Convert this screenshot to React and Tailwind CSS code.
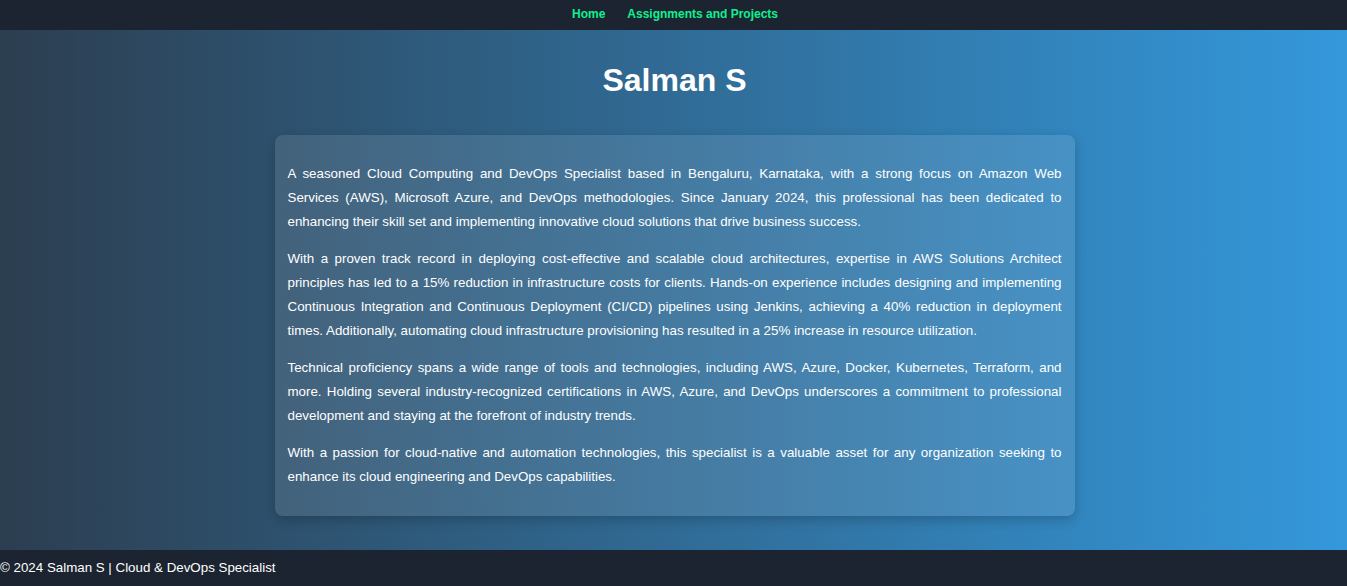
export default function App() {
  const paragraphs = [
    'A seasoned Cloud Computing and DevOps Specialist based in Bengaluru, Karnataka, with a strong focus on Amazon Web Services (AWS), Microsoft Azure, and DevOps methodologies. Since January 2024, this professional has been dedicated to enhancing their skill set and implementing innovative cloud solutions that drive business success.',
    'With a proven track record in deploying cost-effective and scalable cloud architectures, expertise in AWS Solutions Architect principles has led to a 15% reduction in infrastructure costs for clients. Hands-on experience includes designing and implementing Continuous Integration and Continuous Deployment (CI/CD) pipelines using Jenkins, achieving a 40% reduction in deployment times. Additionally, automating cloud infrastructure provisioning has resulted in a 25% increase in resource utilization.',
    'Technical proficiency spans a wide range of tools and technologies, including AWS, Azure, Docker, Kubernetes, Terraform, and more. Holding several industry-recognized certifications in AWS, Azure, and DevOps underscores a commitment to professional development and staying at the forefront of industry trends.',
    'With a passion for cloud-native and automation technologies, this specialist is a valuable asset for any organization seeking to enhance its cloud engineering and DevOps capabilities.',
  ]

  return (
    <div className="min-h-screen font-['Liberation_Sans',Arial,sans-serif] text-white">
      {/* Nav */}
      <nav className="h-[30px] pb-[2px] pl-[3px] bg-[#1b2430] flex items-center justify-center gap-[22px]">
        <a href="#" className="text-[12px] font-bold text-[#0ff08f]">Home</a>
        <a href="#" className="text-[12px] font-bold text-[#0ff08f]">Assignments and Projects</a>
      </nav>

      {/* Main */}
      <main className="bg-[linear-gradient(to_right,#2c3e50,#3498db)] pl-[2px] flex flex-col items-center">
        <h1 className="mt-[32px] text-[32px] leading-[37px] font-bold">Salman S</h1>
        <section className="mt-[36px] mb-[34px] w-[800px] bg-white/10 rounded-lg shadow-[0_4px_12px_rgba(0,0,0,0.2)] px-[13px] py-[27px] space-y-[13px]">
          {paragraphs.map((p, i) => (
            <p key={i} className="text-[13.33px] leading-[24px] text-justify">{p}</p>
          ))}
        </section>
      </main>

      {/* Footer */}
      <footer className="h-[36px] bg-[#1b2430] flex items-center text-[13.33px] font-medium">
        © 2024 Salman S | Cloud &amp; DevOps Specialist
      </footer>
    </div>
  )
}
